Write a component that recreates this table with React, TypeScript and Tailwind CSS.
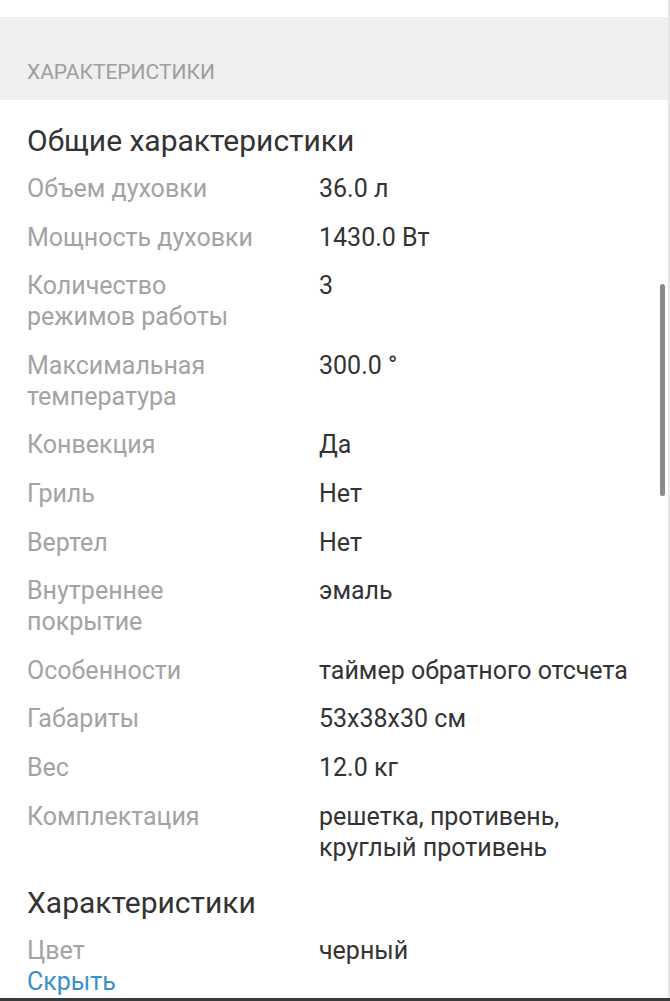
const general = [
  { label: "Объем духовки", value: "36.0 л" },
  { label: "Мощность духовки", value: "1430.0 Вт" },
  { label: "Количество режимов работы", value: "3" },
  { label: "Максимальная температура", value: "300.0 °" },
  { label: "Конвекция", value: "Да" },
  { label: "Гриль", value: "Нет" },
  { label: "Вертел", value: "Нет" },
  { label: "Внутреннее покрытие", value: "эмаль" },
  { label: "Особенности", value: "таймер обратного отсчета" },
  { label: "Габариты", value: "53x38x30 см" },
  { label: "Вес", value: "12.0 кг" },
  { label: "Комплектация", value: "решетка, противень, круглый противень" },
];

const SpecRow = ({ label, value }: { label: string; value: string }) => (
  <div className="grid grid-cols-[292px_1fr] text-[25px] leading-[31px]">
    <div className="max-w-[234px] text-[#a3a3a3]">{label}</div>
    <div className="text-[#333333]">{value}</div>
  </div>
);

export default function App() {
  return (
    <div className="relative h-[1001px] overflow-hidden bg-white font-['Roboto',sans-serif]">
      <div className="h-[17px]" />
      <div className="flex h-[83px] items-end bg-[#efefef] px-[27px] pb-[12px]">
        <span className="text-[21px] text-[#9e9e9e]">ХАРАКТЕРИСТИКИ</span>
      </div>

      <div className="pl-[27px] pr-[8px] pt-[20px]">
        <h2 className="text-[30px] leading-[42px] text-[#333333]">Общие характеристики</h2>
        <div className="mt-[11px] flex flex-col gap-[17.6px]">
          {general.map((row) => (
            <SpecRow key={row.label} label={row.label} value={row.value} />
          ))}
        </div>

        <h2 className="mt-[19px] text-[30px] leading-[42px] text-[#333333]">Характеристики</h2>
        <div className="mt-[11px]">
          <SpecRow label="Цвет" value="черный" />
          <div className="text-[25px] leading-[31px] text-[#3d8fcc]">Скрыть</div>
        </div>
      </div>

      {/* scrollbar */}
      <div className="absolute left-[660px] top-[284px] h-[212px] w-[5px] rounded-full bg-[#8a8a8a]" />
      <div className="absolute right-0 top-0 h-full w-[2px] bg-[#e6e6e6]" />
      <div className="absolute bottom-0 left-0 h-[3px] w-full bg-[#3a3a3a]" />
    </div>
  );
}
